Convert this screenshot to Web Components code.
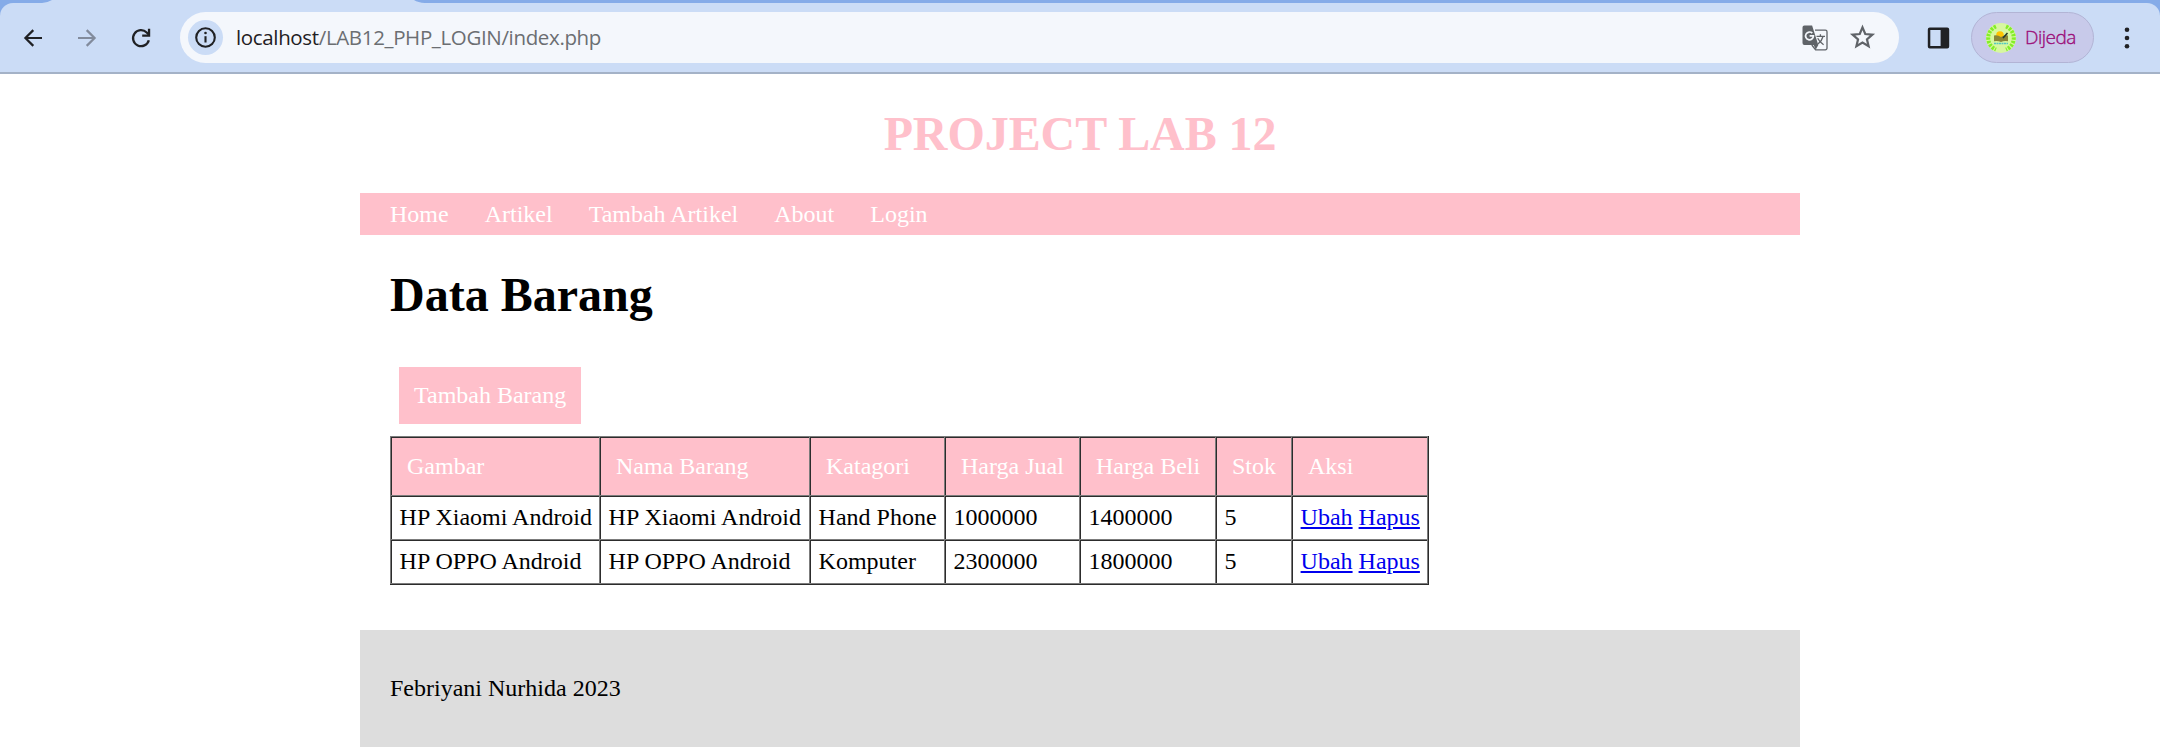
<!DOCTYPE html>
<html lang="id">
<head>
<meta charset="utf-8">
<title>PROJECT LAB 12</title>
<style>
  html, body { margin: 0; padding: 0; background: #fff; }
  body { font: 24px/27px "Liberation Serif", "Times New Roman", serif; color: #000; }
</style>
</head>
<body>
<browser-bar></browser-bar>
<lab-page>
  <site-header slot="header">PROJECT LAB 12</site-header>
  <site-nav slot="nav">
    <nav-link>Home</nav-link><nav-link>Artikel</nav-link><nav-link>Tambah Artikel</nav-link><nav-link>About</nav-link><nav-link>Login</nav-link>
  </site-nav>
  <data-barang></data-barang>
  <site-footer slot="footer">Febriyani Nurhida 2023</site-footer>
</lab-page>
<script>
const define = (name, html) => customElements.define(name, class extends HTMLElement {
  constructor() {
    super();
    const t = document.createElement('template');
    t.innerHTML = html;
    this.attachShadow({ mode: 'open' }).append(t.content.cloneNode(true));
  }
});

define('omni-box', `
<style>
  :host { display: flex; align-items: center; flex: 1; height: 51px; box-sizing: border-box; border-radius: 26px;
    background: #f4f7fc; padding: 0 23px 0 8px; }
  .info { width: 35px; height: 35px; border-radius: 50%; background: #cbdcf6; display: grid; place-items: center; margin-right: 13px; }
  .url { flex: 1; font: 20.5px/27px "Open Sans", sans-serif; letter-spacing: -0.35px; color: #6b6e72; white-space: nowrap; }
  .url b { font-weight: 400; color: #1f2023; }
  svg { display: block; }
  .star { margin-left: 21px; }
</style>
<span class="info"><svg width="23" height="23" viewBox="0 0 23 23"><circle cx="11.5" cy="11.5" r="9.3" fill="none" stroke="#202124" stroke-width="2.1"/><path d="M11.5 10.2v6.3" stroke="#202124" stroke-width="2.1"/><circle cx="11.5" cy="7" r="1.3" fill="#202124"/></svg></span>
<span class="url"><b>localhost</b>/LAB12_PHP_LOGIN/index.php</span>
<svg width="26" height="26" viewBox="0 0 26 26">
  <path d="M13 5.2h10.4a1.6 1.6 0 0 1 1.6 1.6v16.4a1.6 1.6 0 0 1-1.6 1.6H13.6L9.8 20" fill="none" stroke="#5f6368" stroke-width="1.3"/>
  <path d="M2.4.5h7.7l6.2 19.5H2.4A1.9 1.9 0 0 1 .5 18.1V2.4A1.9 1.9 0 0 1 2.4.5Z" fill="#5f6368"/>
  <path d="M11.7 20h4.6l-2.600 4.700Z" fill="#5f6368"/>
  <path d="M10.300 8.200a3.900 3.900 0 1 0 1.100 2.700H7.600" fill="none" stroke="#f4f7fc" stroke-width="1.700"/>
  <path d="M14.500 11.300h8.500M18.400 9.200v2.100M21 11.500c-.8 3.300-2.400 5.500-5 7.500M15.700 13.200c1.300 2.700 3 4.600 5.900 6.600" fill="none" stroke="#5f6368" stroke-width="1.300"/>
</svg>
<svg class="star" width="27" height="27" viewBox="0 0 27 27"><path d="M13.500 3.400l2.750 6.600 7.150.6-5.450 4.700 1.650 6.950-6.100-3.700-6.100 3.700 1.650-6.950-5.450-4.700 7.150-.6Z" fill="none" stroke="#5f6368" stroke-width="2.200"/></svg>
`);

define('profile-chip', `
<style>
  :host { display: flex; align-items: center; box-sizing: border-box; width: 123px; height: 51px; border: 1.5px solid #b2b4d5;
    border-radius: 26px; background: #c8caea; padding-left: 14px; }
  svg { display: block; margin-right: 9px; }
  span { font: 300 19px/27px "Open Sans", sans-serif; letter-spacing: -.5px; color: #9b0c78; -webkit-text-stroke: .35px #9b0c78; }
</style>
<svg width="30" height="30" viewBox="0 0 30 30">
  <circle cx="15" cy="15" r="15" fill="#d7f7a0"/>
  <path d="M10 3.500A12.400 12.400 0 0 0 10 26.500M20 3.500A12.400 12.400 0 0 1 20 26.500" fill="none" stroke="#83ee28" stroke-width="4" stroke-dasharray="2.400 1.100"/>
  <circle cx="14" cy="12" r="3.800" fill="#ffc400"/>
  <path d="M8 12.500q4-.6 7 1.500q3-2.100 7-1.500v5.700q-4-.7-7 .8q-3-1.500-7-.8Z" fill="#8a8637"/>
  <path d="M17 15l4.500-5" stroke="#26382b" stroke-width="1.600"/>
  <path d="M8 20.500h14" stroke="#55c9c0" stroke-width="1.500" stroke-dasharray="2 .5"/>
</svg><span>Dijeda</span>
`);

define('browser-bar', `
<style>
  :host { display: block; background: #85abe8; height: 74px; }
  .tabs { height: 3px; padding-left: 42px; }
  .tabs svg { display: block; }
  .bar { display: flex; align-items: center; box-sizing: border-box; height: 71px; padding: 0 18px;
    background: #cbdcf6; border-bottom: 2px solid #a4b2c7; border-radius: 13px 13px 0 0; }
  .bar > svg { flex: none; display: block; }
  .back, .fwd, .reload { margin-right: 24px; }
  .panel { margin: 0 18px 0 24px; }
  .menu { margin-left: 18px; }
</style>
<div class="tabs"><svg width="384" height="3" viewBox="0 0 384 3"><path d="M0 3Q6 2.500 10 0H372Q376 2.500 383 3Z" fill="#cbdcf6"/></svg></div>
<div class="bar">
  <svg class="back" width="30" height="30" viewBox="0 0 30 30"><path d="M24 15H8M15.300 7.100L7.400 15l7.900 7.900" fill="none" stroke="#202124" stroke-width="2.200"/></svg>
  <svg class="fwd" width="30" height="30" viewBox="0 0 30 30"><path d="M6 15h16M14.700 7.100l7.900 7.900-7.900 7.900" fill="none" stroke="#828b9c" stroke-width="2.200"/></svg>
  <svg class="reload" width="30" height="30" viewBox="0 0 30 30"><path d="M22.800 17.200A8 8 0 1 1 20.700 9.500L22.700 11.500" fill="none" stroke="#202124" stroke-width="2.300"/><path d="M24.200 5.800v8h-8v-2.200h5.700V5.800Z" fill="#202124"/></svg>
  <omni-box></omni-box>
  <svg class="panel" width="30" height="30" viewBox="0 0 30 30"><path d="M6.800 4.500h17.400a2 2 0 0 1 2 2v17a2 2 0 0 1-2 2H6.800a2 2 0 0 1-2-2v-17a2 2 0 0 1 2-2ZM7.300 7v16h10.300V7Z" fill="#202124" fill-rule="evenodd"/></svg>
  <profile-chip></profile-chip>
  <svg class="menu" width="30" height="30" viewBox="0 0 30 30" fill="#202124"><circle cx="15" cy="6.700" r="2.300"/><circle cx="15" cy="15" r="2.300"/><circle cx="15" cy="23.300" r="2.300"/></svg>
</div>
`);

define('lab-page', `
<style>:host { display: block; width: 1440px; margin: 0 auto; } main { display: block; padding: 0 30px 46px; }</style>
<slot name="header"></slot><slot name="nav"></slot><main><slot></slot></main><slot name="footer"></slot>
`);
define('site-header', `
<style>:host { display: block; } h1 { margin: 0; padding: 32px 0; font-size: 48px; line-height: 55px; letter-spacing: -.08px; text-align: center; color: pink; }</style>
<h1><slot></slot></h1>
`);
define('site-nav', `
<style>:host { display: block; } nav { display: flex; gap: 6px; box-sizing: border-box; height: 42px; padding: 8px 15px 7px; background: pink; }</style>
<nav><slot></slot></nav>
`);
define('nav-link', `
<style>:host { display: block; padding: 0 15px; } a { color: #fff; white-space: nowrap; }</style>
<a><slot></slot></a>
`);
define('data-barang', `
<style>
  :host { display: block; }
  h1 { margin: 0; padding: 32px 0 45px; font-size: 48px; line-height: 55px; }
  .add { display: block; width: max-content; margin: 0 0 12px 9px; padding: 15px; background: pink; color: #fff; }
  table { --gray: #7c7c7c; --dark: #2c2c2c; width: 1038px; table-layout: fixed; border-collapse: separate; border-spacing: 0;
    border: 0 solid var(--gray); border-width: 0 1px 1px 0; box-shadow: 1px 1px 0 var(--dark), 0 1px 0 var(--dark), 1px 0 0 var(--dark); }
  th, td { box-sizing: border-box; border: 0 solid var(--gray); border-width: 1px 0 0 1px; box-shadow: inset 1px 1px 0 var(--dark);
    text-align: left; font-weight: 400; white-space: nowrap; vertical-align: top; }
  th { height: 59px; padding: 16px 0 0 16px; background: pink; color: #fff; }
  td { height: 44px; padding: 8px 0 0 8.6px; }
  td a { color: #00e; text-decoration: underline; }
</style>
<h1>Data Barang</h1>
<a class="add">Tambah Barang</a>
<table>
  <colgroup><col style="width:209px"><col style="width:210px"><col style="width:135px"><col style="width:135px"><col style="width:136px"><col style="width:76px"><col style="width:136px"></colgroup>
  <tr><th>Gambar</th><th>Nama Barang</th><th>Katagori</th><th>Harga Jual</th><th>Harga Beli</th><th>Stok</th><th>Aksi</th></tr>
  <tr><td>HP Xiaomi Android</td><td>HP Xiaomi Android</td><td>Hand Phone</td><td>1000000</td><td>1400000</td><td>5</td><td><a>Ubah</a> <a>Hapus</a></td></tr>
  <tr><td>HP OPPO Android</td><td>HP OPPO Android</td><td>Komputer</td><td>2300000</td><td>1800000</td><td>5</td><td><a>Ubah</a> <a>Hapus</a></td></tr>
</table>
`);
define('site-footer', `
<style>:host { display: block; box-sizing: border-box; height: 117px; padding: 45px 30px; background: #ddd; } p { margin: 0; }</style>
<p><slot></slot></p>
`);
</script>
</body>
</html>
